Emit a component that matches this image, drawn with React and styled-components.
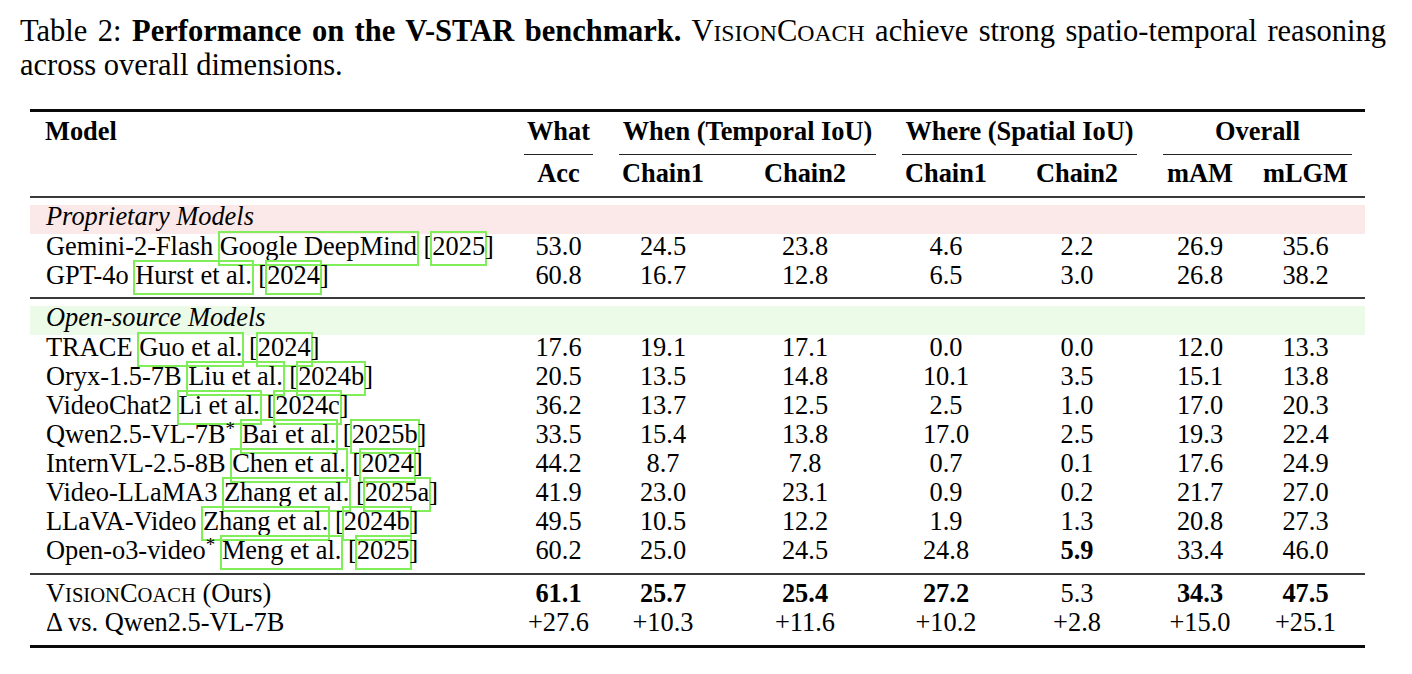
import React from "react";
import styled, { createGlobalStyle } from "styled-components";

const GlobalStyle = createGlobalStyle`
  html, body {
    margin: 0;
    padding: 0;
    background: #fff;
  }
  body {
    font-family: "Liberation Serif", "Times New Roman", serif;
    color: #000;
  }
`;

// column widths, matched to the booktabs layout of the paper
const COLS = "479px 99px 110px 174px 108px 154px 92px 119px";

const proprietary = [
  { name: "Gemini-2-Flash", author: "Google DeepMind", year: "2025", vals: ["53.0", "24.5", "23.8", "4.6", "2.2", "26.9", "35.6"] },
  { name: "GPT-4o", author: "Hurst et al.", year: "2024", vals: ["60.8", "16.7", "12.8", "6.5", "3.0", "26.8", "38.2"] },
];

const openSource = [
  { name: "TRACE", author: "Guo et al.", year: "2024", vals: ["17.6", "19.1", "17.1", "0.0", "0.0", "12.0", "13.3"] },
  { name: "Oryx-1.5-7B", author: "Liu et al.", year: "2024b", vals: ["20.5", "13.5", "14.8", "10.1", "3.5", "15.1", "13.8"] },
  { name: "VideoChat2", author: "Li et al.", year: "2024c", vals: ["36.2", "13.7", "12.5", "2.5", "1.0", "17.0", "20.3"] },
  { name: "Qwen2.5-VL-7B", star: true, author: "Bai et al.", year: "2025b", vals: ["33.5", "15.4", "13.8", "17.0", "2.5", "19.3", "22.4"] },
  { name: "InternVL-2.5-8B", author: "Chen et al.", year: "2024", vals: ["44.2", "8.7", "7.8", "0.7", "0.1", "17.6", "24.9"] },
  { name: "Video-LLaMA3", author: "Zhang et al.", year: "2025a", vals: ["41.9", "23.0", "23.1", "0.9", "0.2", "21.7", "27.0"] },
  { name: "LLaVA-Video", author: "Zhang et al.", year: "2024b", vals: ["49.5", "10.5", "12.2", "1.9", "1.3", "20.8", "27.3"] },
  { name: "Open-o3-video", star: true, author: "Meng et al.", year: "2025", vals: ["60.2", "25.0", "24.5", "24.8", "5.9", "33.4", "46.0"], bold: [4] },
];

const ours = ["61.1", "25.7", "25.4", "27.2", "5.3", "34.3", "47.5"];
const oursBold = [0, 1, 2, 3, 5, 6];
const delta = ["+27.6", "+10.3", "+11.6", "+10.2", "+2.8", "+15.0", "+25.1"];

// LaTeX-style small caps: full capitals for the initials, reduced capitals for the rest
function VisionCoach() {
  return (
    <span>
      V<Low>ISION</Low>C<Low>OACH</Low>
    </span>
  );
}

export default function App() {
  return (
    <Page>
      <GlobalStyle />
      <Caption>
        <CaptionLine $full>
          Table 2: <Strong>Performance on the V-STAR benchmark.</Strong>{" "}
          <VisionCoach /> achieve strong spatio-temporal reasoning
        </CaptionLine>
        <CaptionLine>across overall dimensions.</CaptionLine>
      </Caption>

      <Table>
        <HeadRow $top={5}>
          <HeadCell $left>Model</HeadCell>
          <HeadCell $rule $trimL={15} $trimR={15}>What</HeadCell>
          <HeadCell $rule $span={2} $trimL={11} $trimR={16}>When (Temporal IoU)</HeadCell>
          <HeadCell $rule $span={2} $trimL={10} $trimR={17}>Where (Spatial IoU)</HeadCell>
          <HeadCell $rule $span={2} $trimL={9} $trimR={13}>Overall</HeadCell>
        </HeadRow>
        <HeadRow $top={4}>
          <HeadCell $left $bare />
          <HeadCell $bare>Acc</HeadCell>
          <HeadCell $bare>Chain1</HeadCell>
          <HeadCell $bare>Chain2</HeadCell>
          <HeadCell $bare>Chain1</HeadCell>
          <HeadCell $bare>Chain2</HeadCell>
          <HeadCell $bare>mAM</HeadCell>
          <HeadCell $bare>mLGM</HeadCell>
        </HeadRow>
        <MidRule $gap={8} />

        <Band $tone="#fbe9e9">Proprietary Models</Band>
        {proprietary.map((m) => (
          <ModelRow key={m.name} m={m} />
        ))}
        <MidRule $gap={7} />

        <Band $tone="#ecfae8">Open-source Models</Band>
        {openSource.map((m) => (
          <ModelRow key={m.name} m={m} />
        ))}
        <MidRule $gap={8} />

        <Row $top={4}>
          <NameCell>
            <VisionCoach /> (Ours)
          </NameCell>
          {ours.map((v, i) => (
            <NumCell key={i} $bold={oursBold.includes(i)}>{v}</NumCell>
          ))}
        </Row>
        <Row>
          <NameCell>Δ vs. Qwen2.5-VL-7B</NameCell>
          {delta.map((v, i) => (
            <NumCell key={i}>{v}</NumCell>
          ))}
        </Row>
      </Table>
    </Page>
  );
}

function ModelRow({ m }) {
  return (
    <Row>
      <NameCell>
        {m.name}
        {m.star && <Star>*</Star>} <Cite>{m.author}</Cite> [<Cite>{m.year}</Cite>]
      </NameCell>
      {m.vals.map((v, i) => (
        <NumCell key={i} $bold={m.bold && m.bold.includes(i)}>{v}</NumCell>
      ))}
    </Row>
  );
}

const Page = styled.div`
  width: 1412px;
  height: 674px;
  overflow: hidden;
  padding-top: 14px;
  box-sizing: border-box;
`;

const Caption = styled.div`
  margin: 0 0 0 20px;
  width: 1366px;
  font-size: 30.5px;
  line-height: 34px;
`;

const CaptionLine = styled.div`
  white-space: nowrap;
  text-align: ${(p) => (p.$full ? "justify" : "left")};
  text-align-last: ${(p) => (p.$full ? "justify" : "auto")};
`;

const Strong = styled.b`
  font-weight: 700;
`;

const Low = styled.span`
  font-size: 0.78em;
  line-height: 1;
`;

const Table = styled.div`
  margin: 27px 0 0 30px;
  width: 1335px;
  border-top: 3px solid #0a0a0a;
  border-bottom: 3px solid #0a0a0a;
  padding-bottom: 8px;
  font-size: 26.4px;
`;

const HeadRow = styled.div`
  display: grid;
  grid-template-columns: ${COLS};
  align-items: start;
  font-weight: 700;
  line-height: 29px;
  padding-top: ${(p) => p.$top || 0}px;
`;

const HeadCell = styled.div`
  grid-column: span ${(p) => p.$span || 1};
  text-align: ${(p) => (p.$left ? "left" : "center")};
  padding-left: ${(p) => (p.$left ? "15px" : "0")};
  padding-bottom: ${(p) => (p.$bare ? "0" : "8px")};
  margin: 0 ${(p) => p.$trimR || 0}px 0 ${(p) => p.$trimL || 0}px;
  border-bottom: ${(p) => (p.$rule ? "1px solid #222" : "none")};
  white-space: nowrap;
`;

const MidRule = styled.div`
  height: 2px;
  background: #3a3a3a;
  margin-top: ${(p) => p.$gap}px;
`;

const Band = styled.div`
  background: ${(p) => p.$tone};
  font-style: italic;
  line-height: 23px;
  padding: 0 0 6px 16px;
  margin: 7px 0 -2px;
`;

const Row = styled.div`
  display: grid;
  grid-template-columns: ${COLS};
  line-height: 29px;
  margin-top: ${(p) => p.$top || 0}px;
`;

const NameCell = styled.div`
  padding-left: 16px;
  white-space: nowrap;
`;

const NumCell = styled.div`
  text-align: center;
  font-weight: ${(p) => (p.$bold ? 700 : 400)};
`;

const Star = styled.span`
  font-size: 0.72em;
  vertical-align: 0.42em;
  line-height: 0;
`;

const Cite = styled.span`
  padding: 0 2px 5px;
  margin: 0 -2px;
  box-shadow: inset 0 0 0 2px #80ee58;
`;
